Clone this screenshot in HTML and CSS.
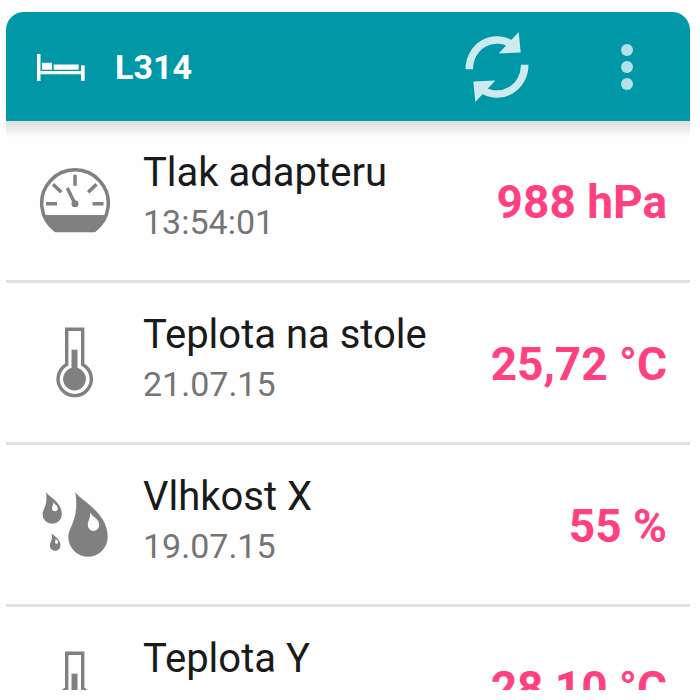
FILE: index.html
```html
<!DOCTYPE html>
<html lang="cs">
<head>
<meta charset="utf-8">
<meta name="viewport" content="width=device-width, initial-scale=1">
<title>L314</title>
<link rel="stylesheet" href="styles.css">
</head>
<body>
<svg class="defs" aria-hidden="true">
  <symbol id="thermometer" viewBox="0.5 0.5 72 72">
    <path d="M28.2 38V2.7H44.2V38A16.6 16.6 0 1 1 28.2 38Z" fill="none" stroke="currentColor" stroke-width="3.4"/>
    <path d="M33 23.2h6V42h-6z" fill="currentColor"/>
    <circle cx="36" cy="52.5" r="11.4" fill="currentColor"/>
  </symbol>
  <symbol id="drop" viewBox="0 0 72 72" overflow="visible">
    <path fill="currentColor" fill-rule="evenodd" d="M36.3 3.8C43 13 68.7 24 68.7 48.5A19.7 19.7 0 0 1 29.3 48.5C29.3 38 40.5 32 36.3 3.8ZM51 24C51.600 30 48.800 32 48.800 36.700A5.700 5.700 0 0 0 60.200 36.700C60.200 30 54 29 51 24Z"/>
  </symbol>
</svg>
<main class="card">
  <header class="bar">
    <svg class="bed" viewBox="0 0 48 28" aria-hidden="true">
      <path fill="currentColor" d="M0 1h3.500v17H44v-5.700h3.700V28H44v-6.700H3.500V28H0zM5 9.700h10v7H5zM16.700 11.400h25v5.300h-25z"/>
    </svg>
    <h1 class="room">L314</h1>
    <button class="action refresh" type="button" aria-label="Obnovit">
      <svg viewBox="0 0 72 72" aria-hidden="true">
        <g id="arrow">
          <path d="M8.300 38.200A27.700 29 0 0 1 51 13.500" fill="none" stroke="currentColor" stroke-width="7.500"/>
          <path d="M57.700 1L59.700 21.400 37.700 22.400Z" fill="currentColor"/>
        </g>
        <use href="#arrow" transform="rotate(180 36 36)"/>
      </svg>
    </button>
    <button class="action more" type="button" aria-label="Nabídka">
      <svg viewBox="0 0 12 48" aria-hidden="true">
        <g fill="currentColor"><circle cx="6" cy="7" r="6"/><circle cx="6" cy="24" r="6"/><circle cx="6" cy="41" r="6"/></g>
      </svg>
    </button>
  </header>
  <ul class="list">
    <li class="row">
      <svg class="icon" viewBox="0 0 72 72" aria-hidden="true">
        <path d="M17 65.500A33.300 33.300 0 1 1 55 65.500Z" fill="none" stroke="currentColor" stroke-width="3.500"/>
        <path d="M3 50H69Q65 60 56 67H16Q7 60 3 50Z" fill="currentColor"/>
        <path d="M36 9.800v11M7 38.700h11M53.500 38.700h11M14 19.200l8.300 8M57.500 19.200l-8.300 8M36 38.700L28.300 23" fill="none" stroke="currentColor" stroke-width="3.500"/>
        <circle cx="36" cy="38.700" r="3.500" fill="currentColor"/>
      </svg>
      <div class="text"><h2 class="name">Tlak adapteru</h2><p class="time">13:54:01</p></div>
      <strong class="value">988 hPa</strong>
    </li>
    <li class="row">
      <svg class="icon" aria-hidden="true"><use href="#thermometer"/></svg>
      <div class="text"><h2 class="name">Teplota na stole</h2><p class="time">21.07.15</p></div>
      <strong class="value">25,72 °C</strong>
    </li>
    <li class="row">
      <svg class="icon" viewBox="0 0.500 72 72" aria-hidden="true">
        <use href="#drop" width="72" height="72"/>
        <use href="#drop" width="72" height="72" transform="translate(-10.800 1.900) scale(.49)"/>
        <use href="#drop" width="72" height="72" transform="translate(2.900 43.800) scale(.27)"/>
      </svg>
      <div class="text"><h2 class="name">Vlhkost X</h2><p class="time">19.07.15</p></div>
      <strong class="value">55 %</strong>
    </li>
    <li class="row">
      <svg class="icon" aria-hidden="true"><use href="#thermometer"/></svg>
      <div class="text"><h2 class="name">Teplota Y</h2></div>
      <strong class="value">28,10 °C</strong>
    </li>
  </ul>
</main>
</body>
</html>
```
FILE: styles.css
```css
* { box-sizing: border-box; }

body {
  margin: 0;
  height: 100vh;
  padding: 12px 10px 10px 6px;
  background: #fff;
  font-family: Roboto, sans-serif;
}

.defs { display: none; }

.card {
  display: flex;
  flex-direction: column;
  height: 100%;
  overflow: hidden;
  border-radius: 18px 18px 0 0;
  background: #fefefe;
}

.bar {
  display: flex;
  flex: none;
  align-items: center;
  padding: 19px 31px 18px;
  background: #0097a7;
  color: #fff;
}

.bed { width: 48px; height: 28px; }

.room {
  flex: 1;
  margin: 0 0 0 30px;
  font-size: 34px;
  line-height: 44px;
  font-weight: 700;
}

.action {
  display: flex;
  justify-content: center;
  padding: 0;
  border: 0;
  background: none;
  color: #cdebee;
  cursor: pointer;
}

.refresh svg { width: 72px; height: 72px; }
.more { width: 64px; margin-left: 62px; color: #b3e0e5; }
.more svg { width: 12px; height: 48px; }

.list {
  flex: 1;
  min-height: 0;
  margin: 0;
  padding: 0;
  overflow: hidden;
  list-style: none;
  background: linear-gradient(#dcdcdc, #fefefe 16px);
}

.row {
  display: flex;
  align-items: center;
  height: 162px;
  padding: 0 23px 0 33px;
  border-bottom: 3px solid #e1e1e1;
}

.icon { flex: none; width: 72px; height: 72px; color: #808080; }

.text {
  flex: 1;
  height: 104px;
  margin-left: 32px;
}

.name {
  margin: 0 0 2px;
  color: #1a1a1a;
  font-size: 40px;
  line-height: 48px;
  font-weight: 400;
}

.time {
  margin: 0;
  color: #757575;
  font-size: 34px;
  line-height: 46px;
}

.value {
  padding-top: 2px;
  color: #ff4081;
  font-size: 46px;
  line-height: 54px;
  font-weight: 700;
}
```
